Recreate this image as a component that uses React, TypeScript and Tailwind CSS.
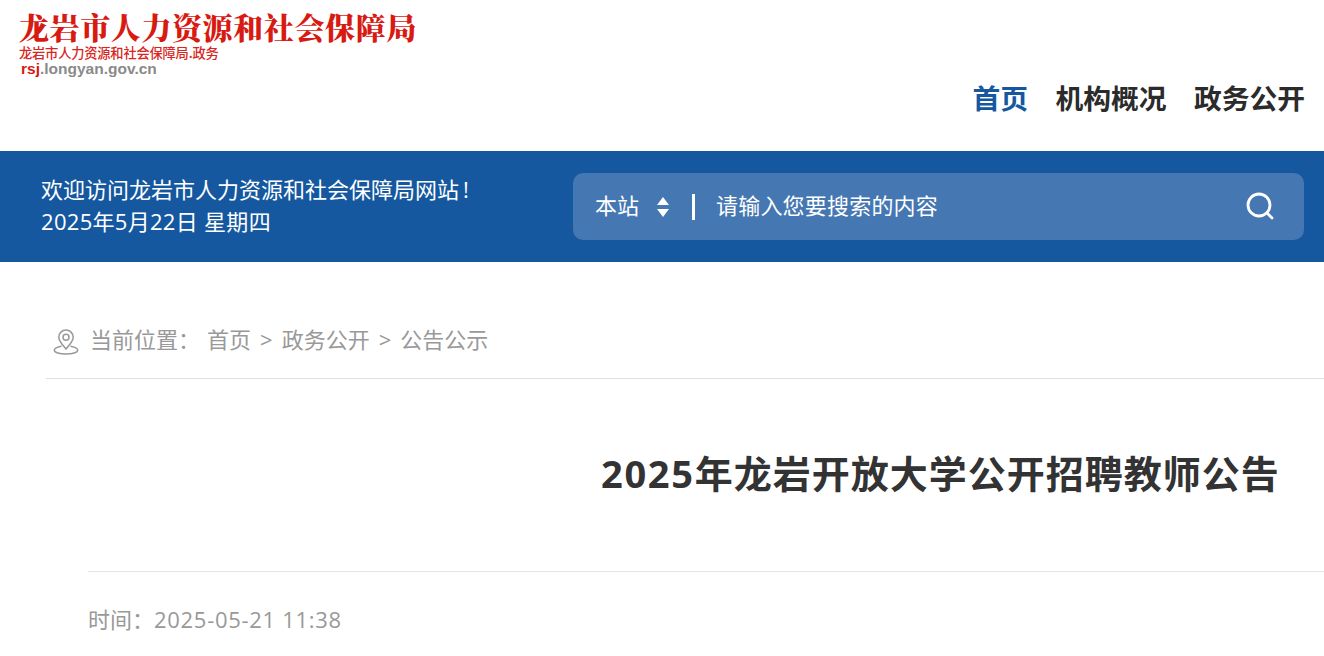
const font = "font-['Open_Sans','Noto_Sans_CJK_SC',sans-serif]"

const LocationIcon = () => (
    <svg className="w-[26px] h-[26px] shrink-0" viewBox="0 0 26 26" fill="none" stroke="#999" strokeWidth="1.5" strokeLinecap="round" strokeLinejoin="round">
        <path d="M13 20C9.500 15.500 5.800 12.500 5.800 8.200a7.200 7.200 0 0 1 14.400 0c0 4.300-3.700 7.300-7.200 11.800z" />
        <circle cx="13" cy="8.200" r="3" />
        <path d="M8 17.200c-3.500.8-6.700 2.200-6.700 4 0 2.200 5.200 3.800 11.700 3.800s11.700-1.600 11.700-3.800c0-1.800-3.200-3.200-6.700-4" />
    </svg>
)

const App = () => {
    return (
        <div className={`${font} h-[656px] w-[1324px] overflow-hidden bg-white`}>
            <header className="flex h-[151px] justify-between">
                <div className="pl-[19px] pt-[7px]">
                    <div className="text-[30px] leading-[38px] font-black tracking-[0.6px] text-[#d71a12] font-['Noto_Serif_CJK_SC','Noto_Sans_CJK_SC',serif]">龙岩市人力资源和社会保障局</div>
                    <div className="text-[13.250px] leading-[15px] font-medium tracking-[-0.2px] text-[#d8251d] font-['Noto_Sans_CJK_SC',sans-serif]">龙岩市人力资源和社会保障局.政务</div>
                    <div className="text-[15.500px] leading-[17px] font-bold text-[#8a8a8a] pl-[2px] font-['Liberation_Sans',sans-serif]"><span className="text-[#d71a12]">rsj</span>.longyan.gov.cn</div>
                </div>
                <nav className="flex gap-[27.500px] pt-[78px] pr-[19px] text-[27.750px] leading-[40px] font-bold text-[#2b2b2b]">
                    <a className="text-[#15589f]">首页</a>
                    <a>机构概况</a>
                    <a>政务公开</a>
                </nav>
            </header>
            <section className="flex h-[111px] items-center justify-between bg-[#15589f] pl-[41px] pr-[20px]">
                <div className="text-[22px] leading-[32px] text-white -mt-[3px]">
                    <p>欢迎访问龙岩市人力资源和社会保障局网站<span className="pl-[4px]">!</span></p>
                    <p className="tracking-[0.3px]">2025年5月22日 星期四</p>
                </div>
                <div className="flex h-[67px] w-[731px] items-center rounded-[10px] bg-[#4577b2] pl-[22px] pr-[29px] text-[22px] text-white">
                    <span className="-mt-[3px]">本站</span>
                    <svg className="ml-[18px] h-[20px] w-[12px]" viewBox="0 0 12 20" fill="white">
                        <path d="M6 0l6 8H0zM6 20l6-8H0z" />
                    </svg>
                    <span className="ml-[23px] h-[26px] w-[3px] bg-white" />
                    <span className="ml-[21px] flex-1 -mt-[3px] tracking-[0.2px]">请输入您要搜索的内容</span>
                    <svg className="h-[28px] w-[28px] -mt-[1px] -translate-x-[1px]" viewBox="0 0 28 28" fill="none" stroke="white" strokeWidth="2.800" strokeLinecap="round">
                        <circle cx="13" cy="13" r="11" />
                        <path d="M21 21l5 5" />
                    </svg>
                </div>
            </section>
            <div className="ml-[46px] mt-[59px] flex h-[58px] items-start border-b border-[#e0e0e0] pl-[7px] text-[22px] leading-[36px] text-[#999]">
                <span className="mr-[11px] pt-[8px]"><LocationIcon /></span>
                <span className="mr-[7px] shrink-0 whitespace-nowrap">当前位置{"\uFF1A"}</span>
                <span>首页</span>
                <span className="mx-[9px]">&gt;</span>
                <span>政务公开</span>
                <span className="mx-[9px]">&gt;</span>
                <span>公告公示</span>
            </div>
            <h1 className="ml-[601px] mt-[65px] whitespace-nowrap text-[38px] leading-[58px] font-bold tracking-[1px] text-[#333]"><span className="tracking-[1.700px]">2025</span>年龙岩开放大学公开招聘教师公告</h1>
            <div className="ml-[88px] mt-[69px] border-t border-[#e5e5e5] pt-[29px] text-[22px] leading-[36px] text-[#999]">时间{"\uFF1A"}<span className="tracking-[0.7px]">2025-05-21 11:38</span></div>
        </div>
    )
}

export default App
